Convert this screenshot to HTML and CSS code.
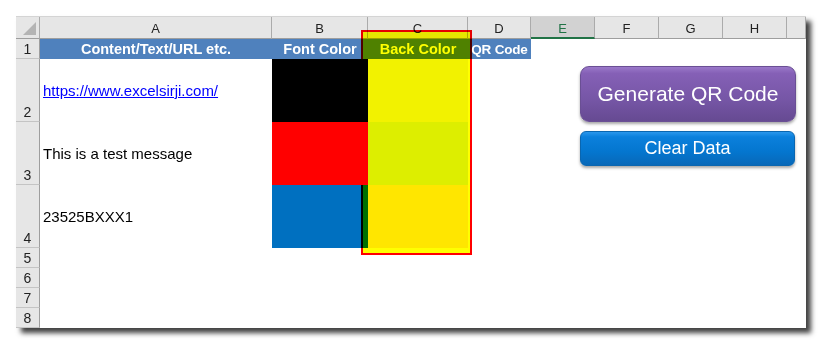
FILE: index.html
```html
<!DOCTYPE html>
<html lang="en">
<head>
  <meta charset="UTF-8">
  <title>QR Code Generator</title>
  <link rel="stylesheet" href="styles.css">
</head>
<body>

<div class="sheet">
  <div class="grid">
    <!-- column headers -->
    <div class="corner"><span class="corner-tri"></span></div>
    <div class="col-hdr">A</div>
    <div class="col-hdr">B</div>
    <div class="col-hdr">C</div>
    <div class="col-hdr">D</div>
    <div class="col-hdr selected">E</div>
    <div class="col-hdr">F</div>
    <div class="col-hdr">G</div>
    <div class="col-hdr">H</div>
    <div class="col-hdr"></div>

    <!-- row 1 -->
    <div class="row-hdr">1</div>
    <div class="cell title">Content/Text/URL etc.</div>
    <div class="cell title">Font Color</div>
    <div class="cell title">Back Color</div>
    <div class="cell title narrow">QR Code</div>
    <div class="cell"></div><div class="cell"></div><div class="cell"></div><div class="cell"></div><div class="cell"></div>

    <!-- row 2 -->
    <div class="row-hdr">2</div>
    <div class="cell text"><a href="#">https://www.excelsirji.com/</a></div>
    <div class="cell fill-black"></div>
    <div class="cell fill-c2"></div>
    <div class="cell"></div><div class="cell"></div><div class="cell"></div><div class="cell"></div><div class="cell"></div><div class="cell"></div>

    <!-- row 3 -->
    <div class="row-hdr">3</div>
    <div class="cell text">This is a test message</div>
    <div class="cell fill-red"></div>
    <div class="cell fill-c3"></div>
    <div class="cell"></div><div class="cell"></div><div class="cell"></div><div class="cell"></div><div class="cell"></div><div class="cell"></div>

    <!-- row 4 -->
    <div class="row-hdr">4</div>
    <div class="cell text">23525BXXX1</div>
    <div class="cell fill-blue"></div>
    <div class="cell fill-c4"></div>
    <div class="cell"></div><div class="cell"></div><div class="cell"></div><div class="cell"></div><div class="cell"></div><div class="cell"></div>

    <div class="row-hdr">5</div><div class="cell span"></div>
    <div class="row-hdr">6</div><div class="cell span"></div>
    <div class="row-hdr">7</div><div class="cell span"></div>
    <div class="row-hdr">8</div><div class="cell span"></div>
  </div>

  <div class="highlight"></div>

  <div class="actions">
    <button class="btn btn-generate" type="button">Generate QR Code</button>
    <button class="btn btn-clear" type="button">Clear Data</button>
  </div>
</div>

</body>
</html>
```

FILE: styles.css
```css
html, body {
  margin: 0;
  background: #fff;
  font-family: "Liberation Sans", Arial, sans-serif;
  min-height: 346px;
}

body {
  padding: 16px 0 0 16px;
  box-sizing: border-box;
}

.sheet {
  position: relative;
  width: 790px;
  height: 312px;
  background: #fff;
  border-top: 1px solid #d4d4d4;
  box-sizing: border-box;
  box-shadow: 5px 5px 5px rgba(0, 0, 0, 0.75);
}

.grid {
  display: grid;
  grid-template-columns: 24px 232px 96px 100px 63px 64px 64px 64px 64px 19px;
  grid-template-rows: 22px 20px 63px 63px 63px 20px 20px 20px 20px;
  font-size: 13px;
  color: #000;
}

.corner {
  position: relative;
  background: #e6e6e6;
  border-right: 1px solid #ababab;
  border-bottom: 1px solid #9e9e9e;
}

.corner-tri {
  position: absolute;
  right: 3px;
  bottom: 3px;
  width: 0;
  height: 0;
  border-left: 13px solid transparent;
  border-bottom: 13px solid #b4b4b4;
}

.col-hdr {
  display: flex;
  align-items: center;
  justify-content: center;
  background: #e6e6e6;
  color: #222;
  border-right: 1px solid #ababab;
  border-bottom: 1px solid #9e9e9e;
  box-sizing: border-box;
  padding-top: 2px;
}

.col-hdr.selected {
  background: #d2d2d2;
  color: #217346;
  border-bottom: 2px solid #217346;
}

.row-hdr {
  display: flex;
  align-items: flex-end;
  justify-content: center;
  background: #e6e6e6;
  color: #222;
  border-right: 1px solid #9e9e9e;
  border-bottom: 1px solid #c4c4c4;
  box-sizing: border-box;
  padding-bottom: 1px;
  font-size: 14px;
}

.cell {
  display: flex;
  align-items: center;
  min-width: 0;
  font-size: 15px;
}

.span {
  grid-column: 2 / -1;
}

.title {
  justify-content: center;
  background: #4f81bd;
  color: #fff;
  font-weight: bold;
  white-space: nowrap;
  font-size: 14.5px;
}

.title.narrow {
  font-size: 13.5px;
  letter-spacing: -0.2px;
}

.text {
  padding-left: 3px;
  white-space: nowrap;
}

.text a {
  color: #0000ff;
}

.fill-black { background: #000; }
.fill-red { background: #ff0000; }
.fill-blue { background: #0070c0; }
.fill-c2 { background: #f2f200; }
.fill-c3 { background: #ddee00; }
.fill-c4 { background: #ffe600; }

.highlight {
  position: absolute;
  left: 345px;
  top: 13px;
  width: 111px;
  height: 225px;
  box-sizing: border-box;
  border: 2px solid #ff0000;
  background: #ffff00;
  mix-blend-mode: multiply;
}

.actions {
  position: absolute;
  left: 564px;
  top: 49px;
  display: flex;
  flex-direction: column;
  gap: 9px;
}

.btn {
  border: none;
  color: #fff;
  font-family: "Liberation Sans", Arial, sans-serif;
  cursor: pointer;
  box-shadow: 0 2px 3px rgba(0, 0, 0, 0.35);
}

.btn-generate {
  width: 216px;
  height: 56px;
  border-radius: 9px;
  font-size: 21px;
  background: linear-gradient(#9a78c9 0%, #8560b6 12%, #7656a6 60%, #664a92 100%);
  border: 1px solid #6a4f94;
}

.btn-clear {
  width: 215px;
  height: 35px;
  border-radius: 6px;
  font-size: 18px;
  background: linear-gradient(#2a97ec 0%, #0b80dc 15%, #0476cf 60%, #0868b8 100%);
  border: 1px solid #0a66b0;
}
```
